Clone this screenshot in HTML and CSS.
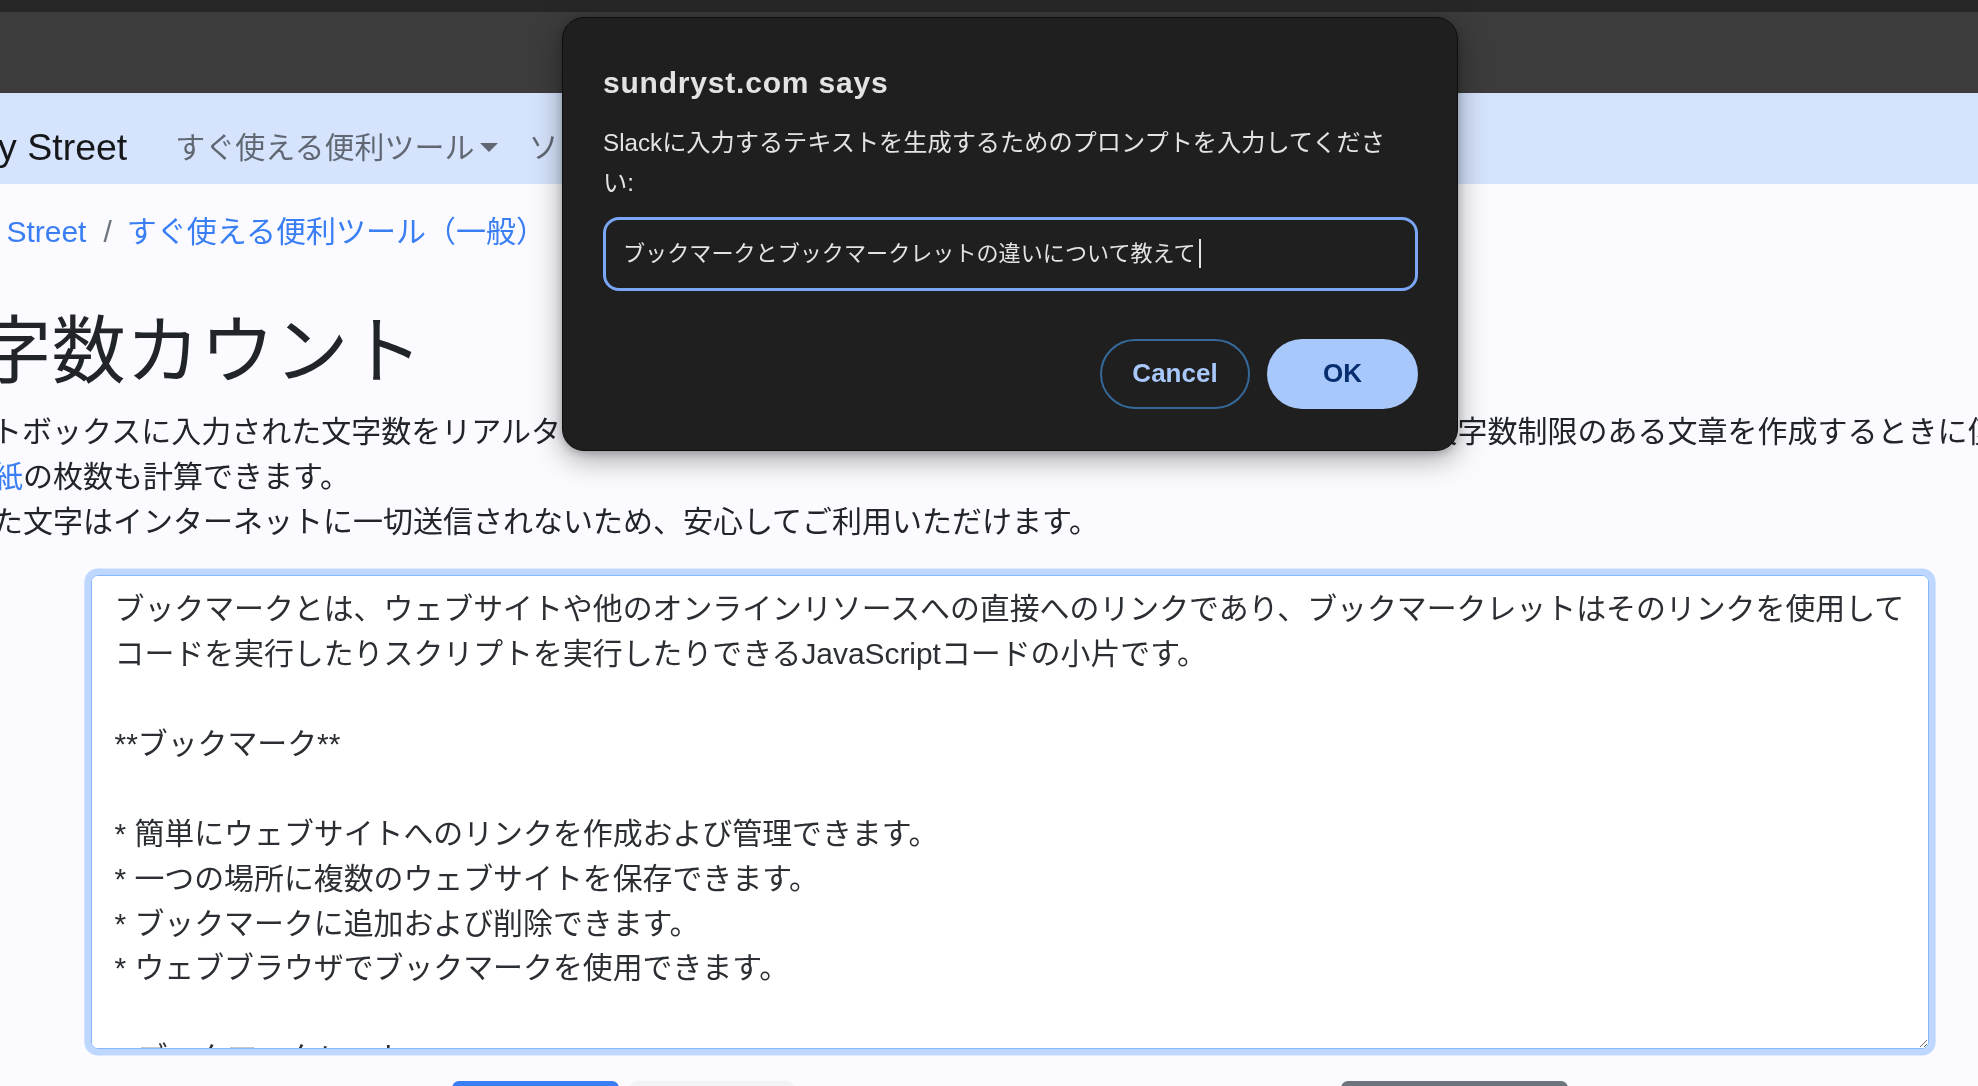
FILE: index.html
```html
<!DOCTYPE html>
<html lang="ja">
<head>
<meta charset="utf-8">
<title>文字数カウント - Sundry Street</title>
<link rel="stylesheet" href="styles.css">
</head>
<body>
<div class="browser-top"></div>
<div class="browser-toolbar"></div>
<nav class="navbar">
  <div class="navbar-inner">
    <a class="brand" href="#">Sundry Street</a>
    <ul class="nav">
      <li><a class="nav-link dropdown" href="#">すぐ使える便利ツール</a></li>
      <li><a class="nav-link dropdown" href="#">ソフトウェア開発</a></li>
    </ul>
  </div>
</nav>
<main class="page">
  <ol class="breadcrumb">
    <li class="crumb"><a href="#">Sundry Street</a></li>
    <li class="crumb"><a href="#">すぐ使える便利ツール（一般）</a></li>
    <li class="crumb active">文字数カウント</li>
  </ol>
  <h1 class="title">文字数カウント</h1>
  <p class="intro">テキストボックスに入力された文字数をリアルタイムでカウントします。レポートや小論文、SNSへの投稿など、文字数制限のある文章を作成するときに便利です。<br><a href="#">原稿用紙</a>の枚数も計算できます。<br>入力した文字はインターネットに一切送信されないため、安心してご利用いただけます。</p>
  <div class="editor">
    <textarea class="text-input" spellcheck="false">ブックマークとは、ウェブサイトや他のオンラインリソースへの直接へのリンクであり、ブックマークレットはそのリンクを使用してコードを実行したりスクリプトを実行したりできるJavaScriptコードの小片です。

**ブックマーク**

* 簡単にウェブサイトへのリンクを作成および管理できます。
* 一つの場所に複数のウェブサイトを保存できます。
* ブックマークに追加および削除できます。
* ウェブブラウザでブックマークを使用できます。

**ブックマークレット**

* ウェブページ上でJavaScriptコードを実行できます。
* ページの内容を変更したり情報を取得したりできます。</textarea>
    <div class="actions">
      <button class="btn btn-primary" aria-label="コピー"></button>
      <button class="btn btn-light" aria-label="貼り付け"></button>
      <button class="btn btn-secondary" aria-label="クリア"></button>
    </div>
  </div>
</main>

<div class="dialog" role="dialog">
  <div class="dialog-title">sundryst.com says</div>
  <div class="dialog-message">Slackに入力するテキストを生成するためのプロンプトを入力してください:</div>
  <div class="dialog-input" role="textbox">ブックマークとブックマークレットの違いについて教えて<span class="caret"></span></div>
  <div class="dialog-buttons">
    <button class="dbtn dbtn-cancel">Cancel</button>
    <button class="dbtn dbtn-ok">OK</button>
  </div>
</div>
</body>
</html>
```

FILE: styles.css
```css
* { box-sizing: border-box; }

html, body {
  margin: 0;
  padding: 0;
}

body {
  position: relative;
  width: 1978px;
  height: 1086px;
  overflow: hidden;
  background: #fafaff;
  font-family: "Liberation Sans", "Noto Sans CJK JP", sans-serif;
  font-size: 30px;
  line-height: 1.5;
  color: #212529;
}

a { text-decoration: none; }

/* browser chrome */
.browser-top { height: 12px; background: #272727; }
.browser-toolbar { height: 81px; background: #3c3c3c; }

/* navbar */
.navbar {
  height: 91px;
  padding-top: 17px;
  background: #d5e3fc;
  display: flex;
  align-items: center;
}
.navbar-inner {
  margin-left: -97px;
  display: flex;
  align-items: center;
  white-space: nowrap;
}
.brand {
  font-size: 37.5px;
  line-height: 1.5;
  color: rgba(0, 0, 0, 0.9);
  margin-left: -5px;
  margin-right: 33px;
}
.nav {
  list-style: none;
  margin: 0;
  padding: 0;
  display: flex;
}
.nav-link {
  display: flex;
  align-items: center;
  padding: 0 15px;
  color: rgba(0, 0, 0, 0.55);
}
.dropdown::after {
  content: "";
  display: block;
  margin-left: 6px;
  border-top: 9px solid;
  border-right: 9px solid transparent;
  border-left: 9px solid transparent;
}

/* page */
.page {
  margin-left: -97px;
  padding-top: 24.5px;
  white-space: nowrap;
}
.breadcrumb {
  display: flex;
  list-style: none;
  margin: 0 0 53px;
  padding: 0;
}
.crumb a { color: #3a7ef4; }
.crumb + .crumb { padding-left: 17px; }
.crumb + .crumb::before {
  content: "/";
  padding-right: 15px;
  color: #6c757d;
}
.crumb.active { color: #6c757d; }

.title {
  margin: 0 0 14.4px;
  font-size: 74.25px;
  font-weight: 400;
  line-height: 1.2;
}

.intro {
  margin: 0 0 30.3px;
  line-height: 44.9px;
}
.intro a { color: #3a7ef4; }

.editor {
  margin-left: 188px;
  width: 1838px;
}
.text-input {
  display: block;
  width: 1838px;
  height: 474px;
  margin: 0;
  padding: 11.2px 10px 7px 22.5px;
  font: inherit;
  font-size: 29.9px;
  line-height: 44.9px;
  color: #2b2f33;
  background: #fff;
  border: 1.875px solid #86b7fe;
  border-radius: 7px;
  box-shadow: 0 0 0 6.6px rgba(13, 110, 253, 0.25);
  outline: none;
  white-space: pre-wrap;
  scrollbar-width: none;
  resize: both;
}

.actions {
  display: flex;
  margin-top: 32px;
  margin-left: 361px;
}
.btn {
  height: 70px;
  border: none;
  border-radius: 7px;
  padding: 0;
}
.btn-primary { width: 167px; background: #3a7ef4; }
.btn-light { width: 164px; margin-left: 11px; background: #f2f3f6; }
.btn-secondary { width: 227px; margin-left: 547px; background: #6c757d; }

/* prompt dialog (overlay) */
.dialog {
  position: absolute;
  left: 562px;
  top: 17px;
  width: 896px;
  padding: 44.6px 39px 41px 40px;
  background: #1f1f1f;
  border: 1px solid #0e0e0e;
  border-radius: 22px;
  box-shadow: 0 8px 30px rgba(0, 0, 0, 0.35), 0 2px 8px rgba(0, 0, 0, 0.2);
  color: #e3e3e3;
}
.dialog-title {
  font-size: 30px;
  font-weight: 700;
  letter-spacing: 0.8px;
  line-height: 40px;
}
.dialog-message {
  margin-top: 20.4px;
  max-width: 800px;
  font-size: 24.2px;
  line-height: 40.5px;
}
.dialog-input {
  margin-top: 13px;
  height: 74px;
  padding: 0 17px;
  display: flex;
  align-items: center;
  border: 3px solid #7aa6f5;
  border-radius: 16px;
  font-size: 22.1px;
  line-height: 1.5;
  color: #e3e3e3;
  white-space: nowrap;
}
.caret {
  display: inline-block;
  width: 2px;
  height: 29px;
  margin-left: 3px;
  background: #e3e3e3;
}
.dialog-buttons {
  margin-top: 48px;
  display: flex;
  justify-content: flex-end;
  gap: 17px;
}
.dbtn {
  height: 70px;
  border-radius: 35px;
  font-family: "Liberation Sans", sans-serif;
  font-size: 26px;
  font-weight: 700;
  padding: 0;
}
.dbtn-cancel {
  width: 150px;
  background: transparent;
  border: 2px solid #35699a;
  color: #a8c7fa;
}
.dbtn-ok {
  width: 151px;
  background: #a8c7fa;
  border: none;
  color: #062e6f;
}
```
